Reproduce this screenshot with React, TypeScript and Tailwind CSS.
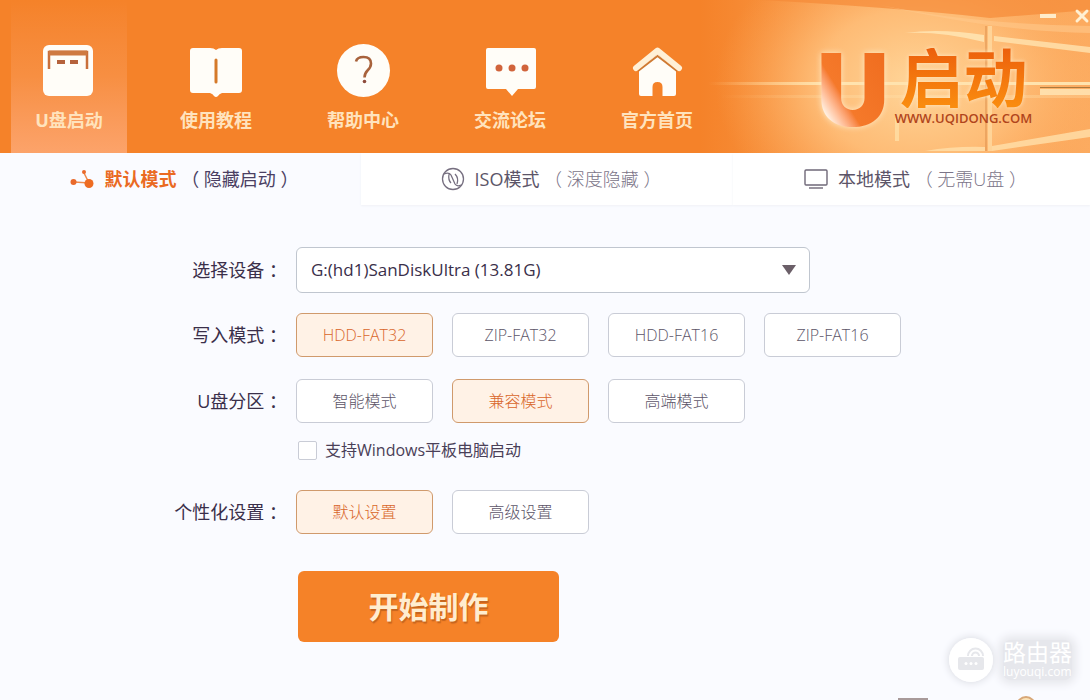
import React from 'react';
import { X } from 'lucide-react';

const navItems = [
  { label: 'U盘启动', icon: <DiskIcon />, active: true },
  { label: '使用教程', icon: <BookIcon />, active: false },
  { label: '帮助中心', icon: <HelpIcon />, active: false },
  { label: '交流论坛', icon: <ChatIcon />, active: false },
  { label: '官方首页', icon: <HomeIcon />, active: false },
];

function DiskIcon() {
  return (
    <svg viewBox="0 0 56 56" className="size-14" aria-hidden="true">
      <rect x="2" y="3" width="50" height="51" rx="6" fill="#fffdf8" />
      <path d="M8 27V10H46V27" fill="none" stroke="#c9703c" strokeWidth="2.500" />
      <path d="M8 11H46" stroke="#cf7a42" strokeWidth="5" />
      <rect x="16" y="18" width="8" height="4" fill="#b5623c" />
      <rect x="29" y="18" width="8" height="4" fill="#b5623c" />
    </svg>
  );
}

function BookIcon() {
  return (
    <svg viewBox="0 0 56 56" className="size-14" aria-hidden="true">
      <path d="M5 6H22Q26 6 28 8Q30 6 34 6H51Q54 6 54 9V48Q54 51 51 51H34Q31 52 30 54Q28 56 26 54Q25 52 22 51H5Q2 51 2 48V9Q2 6 5 6Z" fill="#fffdf8" />
      <path d="M28 18V40" stroke="#d57a2a" strokeWidth="3" strokeLinecap="round" />
    </svg>
  );
}

function HelpIcon() {
  return (
    <svg viewBox="0 0 56 56" className="size-14" aria-hidden="true">
      <circle cx="28.500" cy="28.500" r="26.500" fill="#fffdf8" />
      <path d="M21 19.500Q22 15 28.500 15Q36 15 36 21.500Q36 25 32.500 28.500Q29.500 31.500 29.500 35.500" fill="none" stroke="#a8623c" strokeWidth="2.600" />
      <circle cx="29.500" cy="39.500" r="1.800" fill="#8e4b3c" />
    </svg>
  );
}

function ChatIcon() {
  return (
    <svg viewBox="0 0 56 56" className="size-14" aria-hidden="true">
      <path d="M6 6H52Q54 6 54 8V45Q54 47 52 47H36L30 54L24 47H6Q4 47 4 45V8Q4 6 6 6Z" fill="#fffdf8" />
      <circle cx="17" cy="26" r="3.500" fill="#d1643c" />
      <circle cx="30" cy="26" r="3.500" fill="#d1643c" />
      <circle cx="43" cy="26" r="3.500" fill="#d1643c" />
    </svg>
  );
}

function HomeIcon() {
  return (
    <svg viewBox="0 0 56 56" className="size-14" aria-hidden="true">
      <path d="M10 28L28.500 12L47 28V52Q47 54 45 54H33.500V45Q33.500 40 28.500 40Q23.500 40 23.500 45V54H12Q10 54 10 52Z" fill="#fffdf8" />
      <path d="M9 29L28.500 14L48 29" fill="none" stroke="#cf7a33" strokeWidth="2" />
      <path d="M7 26L28.500 8.500L50 26" fill="none" stroke="#fff0d6" strokeWidth="6" strokeLinecap="round" strokeLinejoin="round" />
    </svg>
  );
}

function HeaderLights() {
  return (
    <svg viewBox="0 0 390 153" className="size-full" aria-hidden="true">
      <defs>
        <linearGradient id="wash" x1="0" y1="0" x2="1" y2="0">
          <stop offset="0" stopColor="#f9a050" stopOpacity="0" />
          <stop offset="0.35" stopColor="#fba356" stopOpacity="0.8" />
          <stop offset="1" stopColor="#fcab60" />
        </linearGradient>
        <radialGradient id="glow" cx="215" cy="112" r="200" gradientUnits="userSpaceOnUse" gradientTransform="scale(1 0.75)">
          <stop offset="0" stopColor="#ffd69a" />
          <stop offset="0.5" stopColor="#ffc37f" stopOpacity="0.8" />
          <stop offset="1" stopColor="#fca758" stopOpacity="0" />
        </radialGradient>
        <linearGradient id="beam" x1="0" y1="0" x2="1" y2="0">
          <stop offset="0" stopColor="#ffd79a" stopOpacity="0" />
          <stop offset="0.3" stopColor="#ffe3ae" />
          <stop offset="1" stopColor="#ffe3ae" />
        </linearGradient>
      </defs>
      <rect width="390" height="153" fill="url(#wash)" />
      <rect width="390" height="153" fill="url(#glow)" />
      <path d="M60 0Q200 8 290 18L390 10V0Z" fill="#f58a38" opacity="0.7" />
      <path d="M180 5Q270 24 390 26V33Q300 32 180 5Z" fill="#ffc88a" opacity="0.6" />
      <path d="M8 82H390V85H8Z" fill="url(#beam)" />
      <path d="M20 95H390V98H20Z" fill="url(#beam)" opacity="0.3" />
      <path d="M340 89H390V95H340Z" fill="#ffeabc" opacity="0.8" />
      <path d="M205 33Q240 28 284 35V42Q240 31 205 33Z" fill="#ffe3b0" opacity="0.9" />
      <path d="M294 36L390 47V53L294 41Z" fill="#ffe3b0" opacity="0.8" />
      <path d="M285 26H287V151H285Z" fill="#d4823f" opacity="0.4" />
      <path d="M288 26H292V151H288Z" fill="#ffd9a0" opacity="0.8" />
      <path d="M292 146L390 129V137L292 151Z" fill="#ffe0aa" opacity="0.8" />
      <path d="M225 151Q255 146 285 147V151Z" fill="#ffe0aa" opacity="0.8" />
      <path d="M195 118H199V141H195Z" fill="#ffdfa5" opacity="0.8" />
      <path d="M340 87.500H390" stroke="#a87a40" strokeWidth="1.200" />
    </svg>
  );
}

function NodesIcon() {
  return (
    <svg viewBox="0 0 24 20" className="h-5 w-6" aria-hidden="true">
      <path d="M14 4L19 14L4 13" fill="none" stroke="#ee8a4c" strokeWidth="1.500" />
      <circle cx="14" cy="3" r="2" fill="#e9692b" />
      <circle cx="3.500" cy="13" r="3" fill="#e9692b" />
      <circle cx="19" cy="14.500" r="4.500" fill="#ee6c22" />
    </svg>
  );
}

function IsoIcon() {
  return (
    <svg viewBox="0 0 24 24" className="size-6" fill="none" stroke="#766f80" strokeWidth="1.300" aria-hidden="true">
      <circle cx="12" cy="12" r="10.500" />
      <path d="M3 7Q8 5 10 8L14 17Q16 20 20 18M8 7Q7 13 10 16M14 7Q18 11 16 17" />
    </svg>
  );
}

function ScreenIcon() {
  return (
    <svg viewBox="0 0 24 20" className="h-5 w-6" fill="none" stroke="#6f6878" strokeWidth="1.400" aria-hidden="true">
      <rect x="1" y="1" width="22" height="15" rx="1" />
      <path d="M5 19H19" />
    </svg>
  );
}

function RouterIcon() {
  return (
    <svg viewBox="0 0 44 44" className="size-11" aria-hidden="true">
      <circle cx="22" cy="22" r="22" fill="#ffffff" />
      <rect x="9" y="19" width="26" height="13" rx="2" fill="#e6e7eb" />
      <path d="M19 18A7.500 7.500 0 0 1 34 18M23 18A3.500 3.500 0 0 1 30 18" fill="none" stroke="#e6e7eb" strokeWidth="2" />
      <circle cx="17" cy="25.500" r="1.500" fill="#ffffff" />
      <circle cx="22" cy="25.500" r="1.500" fill="#ffffff" />
      <circle cx="27" cy="25.500" r="1.500" fill="#ffffff" />
    </svg>
  );
}

const tabs = [
  { name: '默认模式', note: '隐藏启动', icon: <NodesIcon />, active: true },
  { name: 'ISO模式', note: '深度隐藏', icon: <IsoIcon />, active: false },
  { name: '本地模式', note: '无需U盘', icon: <ScreenIcon />, active: false },
];

const Option: React.FC<{ label: string; active?: boolean }> = ({ label, active }) => (
  <button
    type="button"
    aria-pressed={!!active}
    className={`h-11 w-[137px] rounded-md border text-base font-light ${
      active ? 'border-[#d09a6c] bg-[#fff2e6] text-[#d9662a]' : 'border-[#c9ccd6] bg-white text-[#5c5568]'
    }`}
  >
    {label}
  </button>
);

const Row: React.FC<{ label: string; children: React.ReactNode }> = ({ label, children }) => (
  <div role="group" aria-label={label} className="flex items-center gap-[9px]">
    <span className="w-[287px] shrink-0 text-right text-lg text-[#3a2f4a]">{label} ：</span>
    <div className="flex gap-[19px]">{children}</div>
  </div>
);

export default function App() {
  return (
    <div className="relative flex min-h-screen flex-col overflow-hidden bg-[#fafbff] font-['Open_Sans','Noto_Sans_CJK_SC',sans-serif]">
      <header className="relative flex h-[153px] justify-between bg-[#f58229]">
        <div className="absolute inset-y-0 right-0 w-[390px]">
          <HeaderLights />
        </div>

        <nav className="relative flex gap-[31px] pl-[11px]">
          {navItems.map((item) => (
            <a
              key={item.label}
              href="#"
              className={`flex w-[116px] flex-col items-center gap-2 pt-[42px] text-lg leading-7 font-bold text-[#ffe3bd] ${
                item.active ? 'bg-linear-to-b from-[#f58229] via-[#f78f42] to-[#fca36a]' : ''
              }`}
            >
              {item.icon}
              {item.label}
            </a>
          ))}
        </nav>

        <div className="relative flex flex-col items-end">
          <div className="flex h-8 items-center gap-4 text-[#fff0d2]">
            <button type="button" aria-label="最小化" className="flex h-5 w-4 items-center">
              <span className="h-1 w-full bg-[#ffecca]" />
            </button>
            <button type="button" aria-label="关闭">
              <X className="-mr-0.5 size-5" strokeWidth={3.500} />
            </button>
          </div>
          <div className="flex gap-1 pr-14">
            <span className="bg-linear-to-tr from-[#fff3e6] from-20% via-[#f5792a] via-40% to-[#ee6a1c] bg-clip-text font-[Inter] text-[100px] leading-[116px] font-black text-transparent drop-shadow-[0_0_3px_#ffe9c6]">
              U
            </span>
            <div className="flex w-[141px] flex-col items-center pt-4">
              <span className="bg-linear-to-b from-[#ec5f0c] to-[#fa8d0f] bg-clip-text text-[64px] leading-[60px] font-bold whitespace-nowrap text-transparent drop-shadow-[0_0_2px_#ffe9c6]">
                启动
              </span>
              <span className="text-[13px] leading-5 font-semibold text-[#b1451c]">WWW.UQIDONG.COM</span>
            </div>
          </div>
        </div>
      </header>

      <div role="tablist" className="grid h-[52px] grid-cols-[361fr_372fr_357fr]">
        {tabs.map((tab) => (
          <button
            key={tab.name}
            type="button"
            role="tab"
            aria-selected={tab.active}
            className={`flex items-center justify-center gap-2.5 pl-2 text-lg ${
              tab.active ? 'text-[#ea6a22]' : 'bg-white text-[#5c5568] shadow-[0_1px_2px_#f0f1f6]'
            }`}
          >
            {tab.icon}
            <span>
              <span className={tab.active ? 'font-bold' : ''}>{tab.name}</span>
              <span className={tab.active ? 'text-[#4b3f63]' : 'font-light text-[#7b7488]'}> （ {tab.note} ）</span>
            </span>
          </button>
        ))}
      </div>

      <main className="flex flex-col pt-[42px]">
        <div className="flex items-center gap-[9px]">
          <label htmlFor="device" className="w-[287px] shrink-0 text-right text-lg text-[#3a2f4a]">
            选择设备 ：
          </label>
          <div className="relative w-[514px]">
            <select
              id="device"
              className="h-[46px] w-full appearance-none rounded-md border border-[#c0c6cf] bg-white px-3.5 text-[17px] text-[#3a2f4a]"
            >
              <option>G:(hd1)SanDiskUltra (13.81G)</option>
            </select>
            <svg viewBox="0 0 14 10" className="pointer-events-none absolute top-[18px] right-3.5 h-2.5 w-3.5" aria-hidden="true">
              <path d="M0 0H14L7 10Z" fill="#6b5f68" />
            </svg>
          </div>
        </div>

        <div className="mt-5 flex flex-col gap-[22px]">
          <Row label="写入模式">
            <Option label="HDD-FAT32" active />
            <Option label="ZIP-FAT32" />
            <Option label="HDD-FAT16" />
            <Option label="ZIP-FAT16" />
          </Row>
          <Row label="U盘分区">
            <Option label="智能模式" />
            <Option label="兼容模式" active />
            <Option label="高端模式" />
          </Row>
        </div>

        <label className="mt-[15px] flex items-center gap-2 self-start pl-[298px] text-base text-[#4a4058]">
          <input type="checkbox" className="size-[19px] appearance-none rounded-xs border border-[#c9ccd6] bg-white" />
          支持Windows平板电脑启动
        </label>

        <div className="mt-7">
          <Row label="个性化设置">
            <Option label="默认设置" active />
            <Option label="高级设置" />
          </Row>
        </div>

        <button
          type="button"
          className="mt-[37px] ml-[298px] h-[71px] w-[261px] rounded-md bg-[#f58228] text-3xl font-bold text-[#ffedcf] [text-shadow:1px_2px_1px_#c5641f]"
        >
          开始制作
        </button>
      </main>

      {/* Status bar, only its top edge is in view */}
      <div className="absolute inset-x-0 bottom-0 flex h-1 items-start justify-end gap-[88px] overflow-hidden pr-[54px]">
        <svg viewBox="0 0 30 24" className="mt-0.5 h-6 w-[30px] shrink-0" aria-hidden="true">
          <rect x="1" y="1" width="28" height="20" fill="none" stroke="#a89a9a" strokeWidth="2" />
        </svg>
        <svg viewBox="0 0 20 20" className="size-5 shrink-0" aria-hidden="true">
          <circle cx="10" cy="10" r="9" fill="#fbe3b8" stroke="#d8a878" strokeWidth="2" />
        </svg>
      </div>

      <div className="absolute right-[18px] bottom-[18px] flex items-center gap-2.5">
        <span className="rounded-full shadow-[0_0_8px_#d4d6dc]">
          <RouterIcon />
        </span>
        <div className="flex flex-col rounded-lg bg-[#e6e7ec] text-white shadow-[0_0_8px_4px_#e6e7ec]">
          <span className="text-[23px] leading-6">路由器</span>
          <span className="text-xs leading-4">luyouqi.com</span>
        </div>
      </div>
    </div>
  );
}
